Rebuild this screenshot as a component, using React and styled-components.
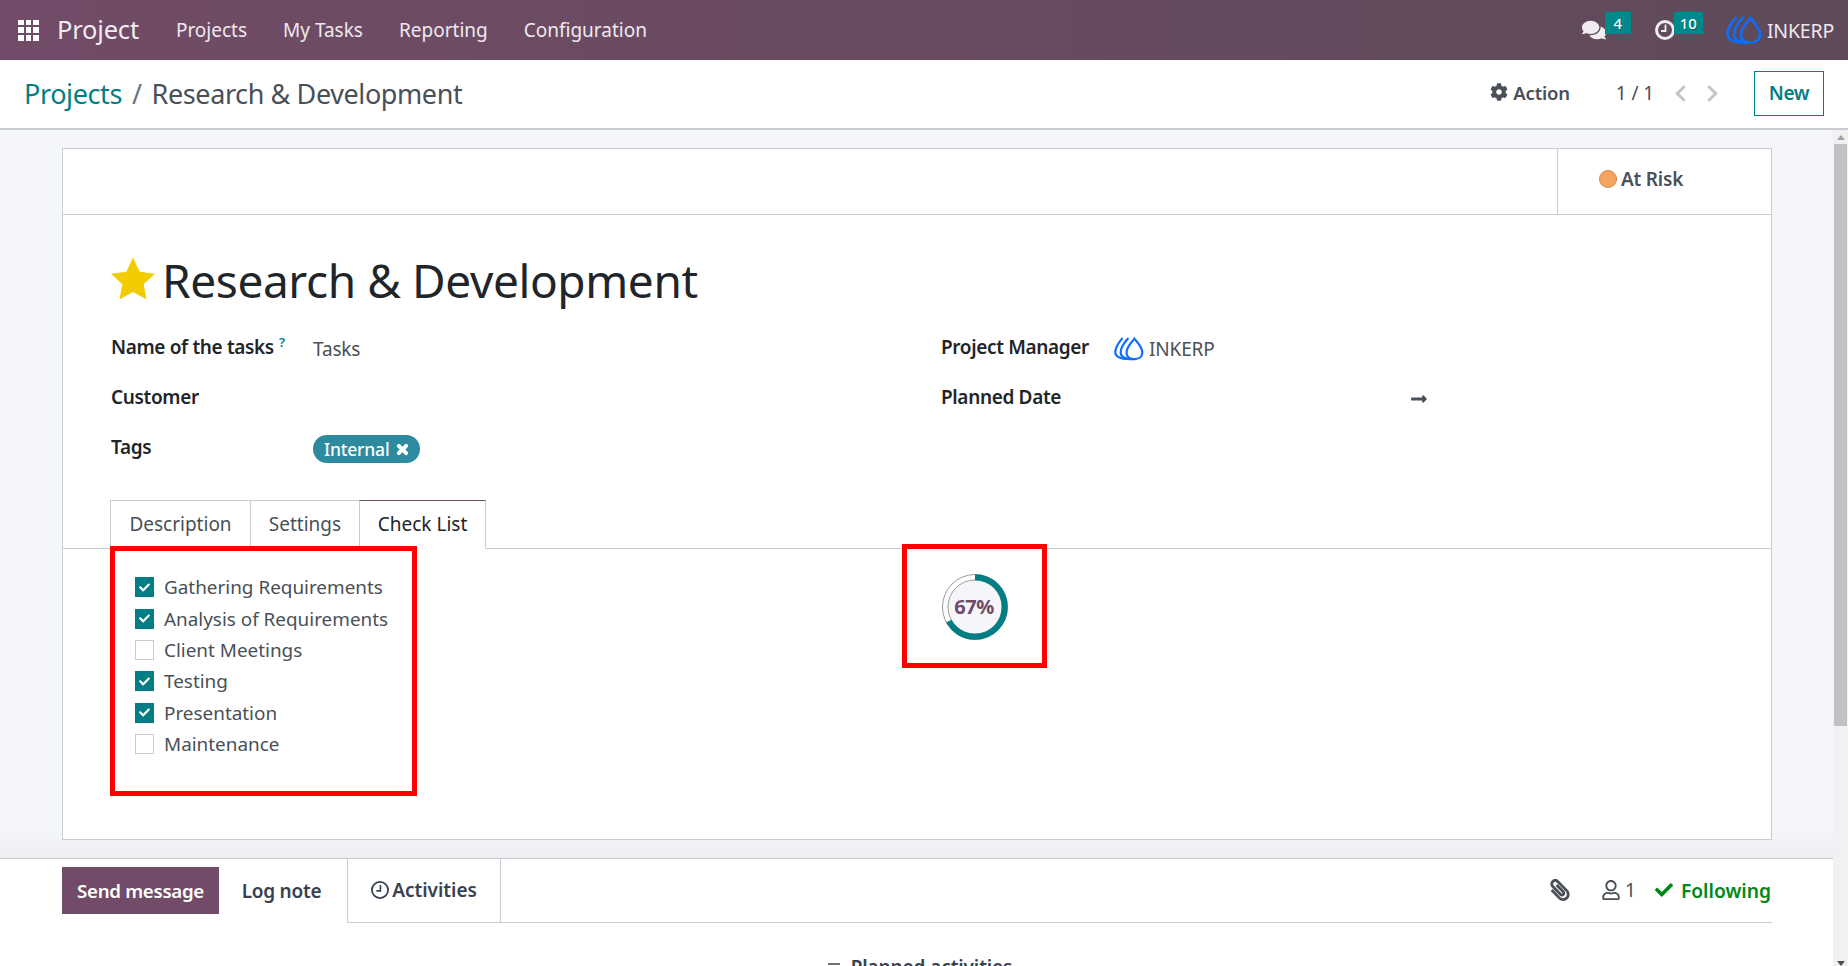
import React from 'react';
import styled, { createGlobalStyle } from 'styled-components';
import {
	FaCheck,
	FaChevronLeft,
	FaChevronRight,
	FaCog,
	FaComments,
	FaLongArrowAltRight,
	FaPaperclip,
	FaRegUser,
	FaTimes,
} from 'react-icons/fa';

const GlobalStyle = createGlobalStyle`
	html, body {
		margin: 0;
		height: 100%;
		overflow: hidden;
		background: #fff;
	}
	* {
		box-sizing: border-box;
	}
	body {
		font-family: "Noto Sans", "Open Sans", sans-serif;
		color: #495057;
	}
`;

const Page = styled.div`
	width: 1848px;
	height: 966px;
	display: flex;
	flex-direction: column;
	overflow: hidden;
`;

const Navbar = styled.header`
	height: 60px;
	flex: none;
	display: flex;
	align-items: center;
	padding-left: 18px;
	color: #fff;
	background: linear-gradient(90deg, #714b67, #5e4a5a);
`;

const AppsIcon = styled.div`
	width: 21px;
	height: 21px;
	display: grid;
	grid-template-columns: repeat(3, 1fr);
	gap: 2px;

	span {
		background: #fff;
	}
`;

const Brand = styled.div`
	margin-left: 18px;
	font-size: 25.5px;
	line-height: 1;
	letter-spacing: -0.2px;
	color: #f1edf0;
`;

const NavMenu = styled.nav`
	margin-left: 37px;
	display: flex;
	gap: 36px;
`;

const NavItem = styled.span`
	font-size: 19px;
	color: #eee9ed;
`;

const Systray = styled.div`
	margin-left: auto;
	display: flex;
	align-items: center;
	padding-right: 14px;
`;

const TrayItem = styled.div`
	display: flex;
	align-items: center;
	margin-right: ${({ $gap }) => $gap}px;
`;

const TrayBadge = styled.span`
	height: 22px;
	min-width: 26px;
	padding: 0 6px;
	margin: -14px 0 0 -1px;
	display: flex;
	align-items: center;
	justify-content: center;
	font-size: 15px;
	font-weight: 500;
	color: #fff;
	background: #00898a;
	text-shadow: 1px 1px 0 rgba(0, 0, 0, 0.3);
`;

const TrayUser = styled.span`
	margin-left: 5px;
	font-size: 19.5px;
	letter-spacing: -0.2px;
	color: #eee9ed;
`;

const ControlPanel = styled.div`
	height: 70px;
	flex: none;
	display: flex;
	align-items: center;
	padding: 0 24px 2px;
	background: #fff;
	border-bottom: 2px solid #c9ccd2;
`;

const Breadcrumb = styled.div`
	font-size: 27px;
	letter-spacing: -0.4px;
	color: #495057;

	a {
		color: #017e84;
	}
	i {
		font-style: normal;
		margin: 0 10px;
		color: #6c757d;
	}
`;

const PanelActions = styled.div`
	margin-left: auto;
	display: flex;
	align-items: center;
`;

const ActionButton = styled.div`
	display: flex;
	align-items: center;
	gap: 5px;
	font-size: 18.5px;
	font-weight: 600;
	letter-spacing: -0.2px;
	margin: -2px 46px 0 0;

	svg {
		width: 18px;
		height: 18px;
	}
`;

const Pager = styled.div`
	font-size: 19px;
	margin-right: 19px;
	letter-spacing: -0.1px;
`;

const PagerArrow = styled.span`
	display: flex;
	color: #c4c6ca;
	margin-right: ${({ $gap }) => $gap}px;

	svg {
		width: 15px;
		height: 19px;
	}
`;

const NewButton = styled.button`
	width: 70px;
	height: 45px;
	padding: 0;
	font: 600 19px "Noto Sans", sans-serif;
	letter-spacing: -0.3px;
	color: #017e84;
	background: #fff;
	border: 1px solid #017e84;
`;

const Workspace = styled.div`
	flex: 1;
	display: flex;
	min-height: 0;
`;

const Main = styled.main`
	flex: 1;
	min-width: 0;
	display: flex;
	flex-direction: column;
`;

const FormArea = styled.div`
	height: 728px;
	flex: none;
	padding: 18px 61px 0 62px;
	background: linear-gradient(#f5f6fa 96%, #eceef1);
`;

const Sheet = styled.section`
	height: 692px;
	background: #fff;
	border: 1px solid #c9ccd2;
`;

const StatusBar = styled.div`
	height: 66px;
	display: flex;
	justify-content: flex-end;
	border-bottom: 1px solid #c9ccd2;
`;

const StatusCell = styled.div`
	width: 214px;
	padding: 0 0 5px 41px;
	display: flex;
	align-items: center;
	gap: 4px;
	border-left: 1px solid #c9ccd2;
	font-size: 19px;
	font-weight: 600;
	letter-spacing: -0.2px;
`;

const StatusDot = styled.span`
	width: 18px;
	height: 18px;
	border-radius: 50%;
	background: #f4a460;
	border: 1px solid #d68a4c;
`;

const FormBody = styled.div`
	padding: 38px 48px 0;
`;

const Title = styled.div`
	display: flex;
	align-items: center;
	gap: 7px;
	height: 56px;

	svg {
		width: 44px;
		height: 43px;
		margin-top: -6px;
		flex: none;
	}
`;

const TitleText = styled.h1`
	margin: -2px 0 0;
	font-size: 46px;
	font-weight: 400;
	letter-spacing: -0.4px;
	color: #212529;
`;

const FieldColumns = styled.div`
	margin-top: 15px;
	display: grid;
	grid-template-columns: 1fr 1fr;
`;

const FieldColumn = styled.div`
	padding-left: ${({ $right }) => ($right ? 24 : 0)}px;
`;

const Field = styled.div`
	height: 50px;
	display: flex;
	align-items: center;
`;

const FieldLabel = styled.label`
	width: ${({ $width }) => $width}px;
	flex: none;
	font-size: 19px;
	font-weight: 600;
	letter-spacing: -0.35px;
	color: #212529;
	margin-top: -4px;

	sup {
		margin-left: 5px;
		font-size: 13px;
		color: #017e84;
	}
`;

const FieldValue = styled.span`
	display: flex;
	align-items: center;
	gap: 5px;
	font-size: 19px;
	letter-spacing: -0.15px;
`;

const DateArrow = styled.span`
	display: flex;
	margin-left: 107px;
	color: #495057;

	svg {
		width: 22px;
		height: 18px;
	}
`;

const Tag = styled.span`
	height: 28px;
	padding: 0 10px 0 11px;
	display: inline-flex;
	align-items: center;
	gap: 6px;
	border-radius: 14px;
	font-size: 17.5px;
	font-weight: 500;
	letter-spacing: -0.2px;
	color: #fff;
	background: #2e8a9e;

	svg {
		width: 15px;
		height: 15px;
		stroke: currentColor;
		stroke-width: 40px;
	}
`;

const Tabs = styled.div`
	margin-top: 26px;
	padding-left: 48px;
	height: 49px;
	display: flex;
	border-bottom: 1px solid #c9ccd2;
`;

const Tab = styled.div`
	height: 49px;
	width: ${({ $width }) => $width}px;
	padding-bottom: 2px;
	display: flex;
	align-items: center;
	justify-content: center;
	font-size: 19px;
	margin-left: -1px;
	border: 1px solid #c9ccd2;
	border-bottom: none;
	background: #fff;
	color: ${({ $active }) => ($active ? '#212529' : '#495057')};
	${({ $active }) => $active && 'border-top-color: #714b67; border-bottom: 1px solid #fff;'}
`;

const TabBody = styled.div`
	position: relative;
	display: grid;
	grid-template-columns: 1fr 1fr;
`;

const CheckList = styled.ul`
	margin: 0;
	padding: 22.5px 0 0 72px;
	list-style: none;
`;

const CheckRow = styled.li`
	height: 31.4px;
	display: flex;
	align-items: center;
	gap: 10px;
	font-size: 18.9px;
`;

const CheckBox = styled.span`
	width: 19px;
	height: 20px;
	flex: none;
	display: flex;
	align-items: center;
	justify-content: center;
	color: #fff;
	background: ${({ $checked }) => ($checked ? '#017e84' : '#fff')};
	border: 1px solid ${({ $checked }) => ($checked ? '#017e84' : '#c9ccd2')};

	svg {
		width: 11px;
		height: 11px;
	}
`;

const ProgressCell = styled.div`
	padding: 25px 0 0 25px;
`;

const ProgressRing = styled.div`
	position: relative;
	width: 66px;
	height: 66px;

	svg {
		display: block;
	}
`;

const ProgressLabel = styled.span`
	position: absolute;
	inset: 0;
	padding: 0 2px 2px 0;
	display: flex;
	align-items: center;
	justify-content: center;
	font-size: 20px;
	font-weight: 700;
	letter-spacing: -0.5px;
	color: #714b67;
`;

const Highlight = styled.div`
	position: absolute;
	border: 5px solid #ff0000;
	pointer-events: none;
`;

const CheckListHighlight = styled(Highlight)`
	left: 47px;
	top: -3px;
	width: 307px;
	height: 250px;
`;

const ProgressHighlight = styled(Highlight)`
	left: 839px;
	top: -5px;
	width: 145px;
	height: 124px;
`;

const Chatter = styled.section`
	flex: 1;
	padding: 0 61px 0 62px;
	background: #fff;
	border-top: 1px solid #c9ccd2;
`;

const ChatterBar = styled.div`
	height: 64px;
	display: flex;
`;

const SendButton = styled.button`
	width: 157px;
	height: 47px;
	margin-top: 8px;
	padding: 0;
	border: none;
	font: 600 18.7px "Noto Sans", sans-serif;
	letter-spacing: -0.3px;
	color: #fff;
	background: #714b67;
`;

const LogNote = styled.div`
	width: 128px;
	padding: 0 3px 1px 0;
	display: flex;
	align-items: center;
	justify-content: center;
	font-size: 19px;
	font-weight: 600;
	letter-spacing: -0.25px;
	color: #374151;
`;

const ActivitiesTab = styled.div`
	width: 154px;
	padding-bottom: 1px;
	display: flex;
	align-items: center;
	justify-content: center;
	gap: 3px;
	font-size: 19px;
	font-weight: 600;
	color: #374151;
	border-left: 1px solid #c9ccd2;
	border-right: 1px solid #c9ccd2;
	border-bottom: 1px solid #c9ccd2;
`;

const ChatterActions = styled.div`
	flex: 1;
	padding-bottom: 1px;
	display: flex;
	align-items: center;
	justify-content: flex-end;
	border-bottom: 1px solid #c9ccd2;
`;

const ClipIcon = styled.span`
	display: flex;
	margin-right: 31px;
	transform: scaleX(-1);

	svg {
		width: 22px;
		height: 22px;
	}
`;

const Followers = styled.div`
	display: flex;
	align-items: center;
	gap: 5px;
	font-size: 19px;
	margin-right: 19px;

	svg {
		width: 18px;
		height: 20px;
	}
`;

const Following = styled.div`
	display: flex;
	align-items: center;
	gap: 8px;
	margin-right: 1px;
	font-size: 19.2px;
	font-weight: 600;
	color: #008818;

	svg {
		width: 18px;
		height: 18px;
	}
`;

const ActivitySeparator = styled.div`
	margin-top: 34px;
	padding-left: 6px;
	display: flex;
	justify-content: center;
	align-items: center;
	gap: 11px;
	font-size: 19px;
	font-weight: 600;
	letter-spacing: -0.1px;
	color: #374151;
	line-height: 20px;
`;

const SeparatorDash = styled.span`
	width: 12px;
	height: 2px;
	margin-bottom: 6px;
	background: #6c757d;
`;

const Scrollbar = styled.div`
	width: 15px;
	flex: none;
	display: flex;
	flex-direction: column;
	align-items: center;
	background: #f1f1f1;
`;

const ScrollArrow = styled.span`
	width: 0;
	height: 0;
	margin: ${({ $down }) => ($down ? '4px 0 0' : '5px 0 4px')};
	border-left: 4px solid transparent;
	border-right: 4px solid transparent;
	${({ $down }) => ($down ? 'border-top: 5px solid #505050;' : 'border-bottom: 5px solid #a3a3a3;')}
`;

const ScrollThumb = styled.div`
	width: 13px;
	height: 582px;
	margin-bottom: auto;
	background: #c1c1c1;
`;

const InkerpLogo = ({ size = 36 }) => (
	<svg width={size} height={(size * 28) / 36} viewBox="0 0 36 28" fill="none" stroke="#0d6efd" strokeWidth="2.6" strokeLinecap="round">
		<path d="M24.5 2 C28.5 7 34 12 34 18.5 C34 24 29.5 26.5 24.5 26.5 C19.5 26.5 15 24 15 18.5 C15 12 20.5 7 24.5 2Z" />
		<path d="M16.5 2 C12 7 8 12 8 18.5 C8 24 13 26.5 24 26.5" />
		<path d="M9.5 2 C5.5 7 1.5 12 1.5 18 C1.5 24 8 26.5 19 26.5" />
	</svg>
);

const ClockIcon = ({ size, color, width }) => (
	<svg width={size} height={size} viewBox="0 0 20 20" fill="none" stroke={color} strokeWidth={width}>
		<circle cx="10" cy="10" r={10 - width / 2} />
		<path d="M10.5 4.5 V11 H6" strokeWidth="1.8" />
	</svg>
);

const StarIcon = () => (
	<svg viewBox="0 0 44 42" fill="#f3cc00">
		<polygon points="22,0 28.6,14.2 44,16.2 32.6,26.8 35.6,42 22,34.5 8.4,42 11.4,26.8 0,16.2 15.4,14.2" />
	</svg>
);

const checklist = [
	{ label: 'Gathering Requirements', checked: true },
	{ label: 'Analysis of Requirements', checked: true },
	{ label: 'Client Meetings', checked: false },
	{ label: 'Testing', checked: true },
	{ label: 'Presentation', checked: true },
	{ label: 'Maintenance', checked: false },
];

const ringRadius = 29.75;
const ringLength = 2 * Math.PI * ringRadius;

export default function App() {
	return (
		<Page>
			<GlobalStyle />
			<Navbar>
				<AppsIcon>
					{Array.from({ length: 9 }, (_, i) => (
						<span key={i} />
					))}
				</AppsIcon>
				<Brand>Project</Brand>
				<NavMenu>
					<NavItem>Projects</NavItem>
					<NavItem>My Tasks</NavItem>
					<NavItem>Reporting</NavItem>
					<NavItem>Configuration</NavItem>
				</NavMenu>
				<Systray>
					<TrayItem $gap={24}>
						<FaComments size={24} color="#f0ecef" />
						<TrayBadge>4</TrayBadge>
					</TrayItem>
					<TrayItem $gap={23}>
						<ClockIcon size={20} color="#f0ecef" width={3} />
						<TrayBadge>10</TrayBadge>
					</TrayItem>
					<InkerpLogo />
					<TrayUser>INKERP</TrayUser>
				</Systray>
			</Navbar>
			<ControlPanel>
				<Breadcrumb>
					<a>Projects</a>
					<i>/</i>
					Research &amp; Development
				</Breadcrumb>
				<PanelActions>
					<ActionButton>
						<FaCog />
						Action
					</ActionButton>
					<Pager>1 / 1</Pager>
					<PagerArrow $gap={17}>
						<FaChevronLeft />
					</PagerArrow>
					<PagerArrow $gap={34}>
						<FaChevronRight />
					</PagerArrow>
					<NewButton>New</NewButton>
				</PanelActions>
			</ControlPanel>
			<Workspace>
				<Main>
					<FormArea>
						<Sheet>
							<StatusBar>
								<StatusCell>
									<StatusDot />
									At Risk
								</StatusCell>
							</StatusBar>
							<FormBody>
								<Title>
									<StarIcon />
									<TitleText>Research &amp; Development</TitleText>
								</Title>
								<FieldColumns>
									<FieldColumn>
										<Field>
											<FieldLabel $width={202}>
												Name of the tasks<sup>?</sup>
											</FieldLabel>
											<FieldValue>Tasks</FieldValue>
										</Field>
										<Field>
											<FieldLabel $width={202}>Customer</FieldLabel>
										</Field>
										<Field>
											<FieldLabel $width={202}>Tags</FieldLabel>
											<Tag>
												Internal
												<FaTimes />
											</Tag>
										</Field>
									</FieldColumn>
									<FieldColumn $right>
										<Field>
											<FieldLabel $width={173}>Project Manager</FieldLabel>
											<FieldValue>
												<InkerpLogo size={30} />
												INKERP
											</FieldValue>
										</Field>
										<Field>
											<FieldLabel $width={360}>Planned Date</FieldLabel>
											<DateArrow>
												<FaLongArrowAltRight />
											</DateArrow>
										</Field>
									</FieldColumn>
								</FieldColumns>
							</FormBody>
							<Tabs>
								<Tab $width={141}>Description</Tab>
								<Tab $width={110}>Settings</Tab>
								<Tab $width={127} $active>
									Check List
								</Tab>
							</Tabs>
							<TabBody>
								<CheckList>
									{checklist.map(({ label, checked }) => (
										<CheckRow key={label}>
											<CheckBox $checked={checked}>{checked && <FaCheck />}</CheckBox>
											{label}
										</CheckRow>
									))}
								</CheckList>
								<ProgressCell>
									<ProgressRing>
										<svg width="66" height="66" viewBox="0 0 66 66" fill="none">
											<circle cx="33" cy="33" r="32.5" stroke="#9a9a9a" strokeWidth="1" />
											<circle cx="33" cy="33" r="27" fill="#f5f6fa" stroke="#9a9a9a" strokeWidth="1" />
											<circle
												cx="33"
												cy="33"
												r={ringRadius}
												stroke="#017e84"
												strokeWidth="6"
												strokeDasharray={`${ringLength * 0.67} ${ringLength}`}
												transform="rotate(-90 33 33)"
											/>
										</svg>
										<ProgressLabel>67%</ProgressLabel>
									</ProgressRing>
								</ProgressCell>
								<CheckListHighlight />
								<ProgressHighlight />
							</TabBody>
						</Sheet>
					</FormArea>
					<Chatter>
						<ChatterBar>
							<SendButton>Send message</SendButton>
							<LogNote>Log note</LogNote>
							<ActivitiesTab>
								<ClockIcon size={18} color="#374151" width={2} />
								Activities
							</ActivitiesTab>
							<ChatterActions>
								<ClipIcon>
									<FaPaperclip />
								</ClipIcon>
								<Followers>
									<FaRegUser />1
								</Followers>
								<Following>
									<FaCheck />
									Following
								</Following>
							</ChatterActions>
						</ChatterBar>
						<ActivitySeparator>
							<SeparatorDash />
							Planned activities
						</ActivitySeparator>
					</Chatter>
				</Main>
				<Scrollbar>
					<ScrollArrow />
					<ScrollThumb />
					<ScrollArrow $down />
				</Scrollbar>
			</Workspace>
		</Page>
	);
}
